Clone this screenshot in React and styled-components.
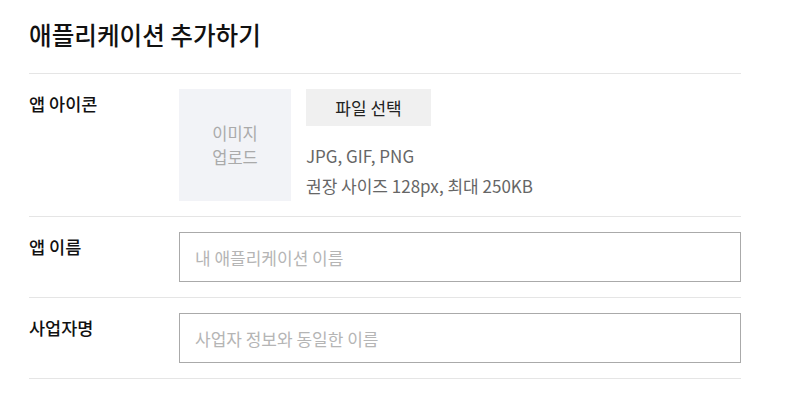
import React from "react"
import styled, { createGlobalStyle } from "styled-components"

const GlobalStyle = createGlobalStyle`
  body {
    margin: 0;
    background: #fff;
    font-family: "Noto Sans CJK KR", "Noto Sans", sans-serif;
    color: #111;
  }
  * { box-sizing: border-box; }
`

const App = () => (
  <>
    <GlobalStyle />
    <Page>
      <Title>애플리케이션 추가하기</Title>
      <Row>
        <Label>앱 아이콘</Label>
        <IconField>
          <Upload>
            이미지
            <br />
            업로드
          </Upload>
          <FileInfo>
            <FileButton type="button">파일 선택</FileButton>
            <Hint>
              JPG, GIF, PNG
              <br />
              권장 사이즈 128px, 최대 250KB
            </Hint>
          </FileInfo>
        </IconField>
      </Row>
      <Row>
        <Label>앱 이름</Label>
        <Input placeholder="내 애플리케이션 이름" />
      </Row>
      <Row>
        <Label>사업자명</Label>
        <Input placeholder="사업자 정보와 동일한 이름" />
      </Row>
    </Page>
  </>
)

const Page = styled.div`
  width: 712px;
  margin-left: 29px;
`

const Title = styled.h1`
  margin: 0;
  height: 74px;
  padding-top: 15px;
  font-size: 24.6px;
  font-weight: 500;
  line-height: 38px;
  border-bottom: 1px solid #e5e5e5;
`

const Row = styled.div`
  display: flex;
  align-items: flex-start;
  padding: 15px 0;
  border-bottom: 1px solid #e5e5e5;
`

const Label = styled.div`
  width: 150px;
  flex-shrink: 0;
  padding-top: 2px;
  font-size: 17.5px;
  font-weight: 500;
  line-height: 26px;
  color: #111;
`

const IconField = styled.div`
  display: flex;
  gap: 15px;
`

const Upload = styled.div`
  width: 112px;
  height: 112px;
  display: flex;
  align-items: center;
  justify-content: center;
  text-align: center;
  background: #f2f3f7;
  color: #aaa;
  font-size: 16.5px;
  line-height: 24px;
`

const FileInfo = styled.div`
  display: flex;
  flex-direction: column;
  align-items: flex-start;
`

const FileButton = styled.button`
  width: 125px;
  height: 37px;
  border: 0;
  background: #f0f0f0;
  color: #222;
  font-family: inherit;
  font-size: 17px;
  padding: 0;
`

const Hint = styled.p`
  margin: 15px 0 0;
  font-size: 17px;
  line-height: 30px;
  color: #666;
`

const Input = styled.input`
  flex: 1;
  height: 50px;
  border: 1px solid #aaa;
  border-radius: 0;
  padding: 0 15px;
  font-family: inherit;
  font-size: 17px;
  color: #111;
  outline: none;
  &::placeholder {
    color: #b5b5b5;
  }
`

export default App
